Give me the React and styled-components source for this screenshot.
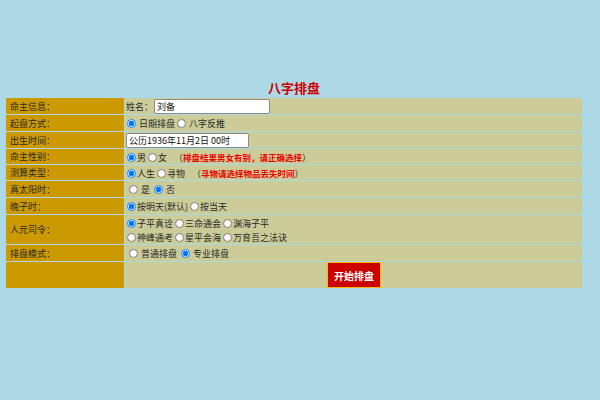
import React from 'react'
import styled, { createGlobalStyle } from 'styled-components'

const GlobalStyle = createGlobalStyle`
    html, body {
        margin: 0;
        padding: 0;
        background: #add8e6;
        font-family: "Noto Sans CJK SC", "Liberation Sans", sans-serif;
    }
`

const Page = styled.div`
    width: 600px;
    height: 400px;
    padding-top: 79px;
    box-sizing: border-box;
`

const Title = styled.div`
    width: 578px;
    margin-left: 5px;
    text-align: center;
    color: #cc0000;
    font-size: 13px;
    font-weight: bold;
    line-height: 18px;
`

const Board = styled.table`
    width: 578px;
    margin-left: 5px;
    border-spacing: 1px;
    border-collapse: separate;
    font-size: 9px;
    color: #2a2a2a;
`

const Label = styled.td`
    width: 114px;
    height: ${p => p.$h || 16}px;
    padding: 0 0 0 4px;
    background: #cc9900;
    vertical-align: middle;
    white-space: nowrap;
    line-height: 13px;
`

const Field = styled.td`
    height: ${p => p.$h || 16}px;
    padding: 0 0 0 1px;
    background: #cccc99;
    vertical-align: middle;
    white-space: nowrap;
    line-height: 13px;
    text-align: ${p => p.$center ? 'center' : 'left'};
`

const TextBox = styled.input`
    width: ${p => p.$w}px;
    height: 15px;
    box-sizing: border-box;
    margin: 0;
    padding: 0 2px;
    border: 1px solid #8a8a8a;
    border-radius: 2px;
    background: #fff;
    font-family: inherit;
    font-size: 9px;
    color: #111;
    vertical-align: middle;
`

const Radio = styled.input.attrs({ type: 'radio' })`
    width: 9px;
    height: 9px;
    margin: 0 1px 0 ${p => p.$gap ? 3 : 1}px;
    vertical-align: middle;
    accent-color: #0075ff;
`

const Option = styled.span`
    vertical-align: middle;
    margin-right: 1px;
`

const Note = styled.span`
    margin-left: 6px;
    vertical-align: middle;
`

const Warn = styled.b`
    color: #ee0000;
    font-size: 8.5px;
    font-weight: bold;
`

const Start = styled.button`
    width: 54px;
    height: 26px;
    margin: 0;
    border: 1px solid #ffb800;
    background: #cc0000;
    color: #fff;
    font-family: inherit;
    font-size: 10px;
    font-weight: bold;
    vertical-align: middle;
`

const Choice = ({ name, label, checked, gap }) => (
    <>
        <Radio name={name} defaultChecked={checked} $gap={gap} />
        <Option>{label}</Option>
    </>
)

const App = () => {
    return (
        <Page>
            <GlobalStyle />
            <Title>八字排盘</Title>
            <Board>
                <tbody>
                    <tr>
                        <Label>命主信息：</Label>
                        <Field>
                            <Option>姓名：</Option>
                            <TextBox $w={116} defaultValue="刘备" />
                        </Field>
                    </tr>
                    <tr>
                        <Label>起盘方式：</Label>
                        <Field>
                            <Choice name="way" label=" 日期排盘" checked />
                            <Choice name="way" label=" 八字反推" />
                        </Field>
                    </tr>
                    <tr>
                        <Label>出生时间：</Label>
                        <Field>
                            <TextBox $w={123} defaultValue="公历1936年11月2日 00时" />
                        </Field>
                    </tr>
                    <tr>
                        <Label $h={15}>命主性别：</Label>
                        <Field $h={15}>
                            <Choice name="sex" label="男" checked />
                            <Choice name="sex" label="女" />
                            <Note>（<Warn>排盘结果男女有别，请正确选择</Warn>）</Note>
                        </Field>
                    </tr>
                    <tr>
                        <Label $h={15}>测算类型：</Label>
                        <Field $h={15}>
                            <Choice name="kind" label="人生" checked />
                            <Choice name="kind" label="寻物" />
                            <Note>（<Warn>寻物请选择物品丢失时间</Warn>）</Note>
                        </Field>
                    </tr>
                    <tr>
                        <Label>真太阳时：</Label>
                        <Field>
                            <Choice name="sun" label=" 是" gap />
                            <Choice name="sun" label=" 否" checked gap />
                        </Field>
                    </tr>
                    <tr>
                        <Label>晚子时：</Label>
                        <Field>
                            <Choice name="night" label="按明天(默认)" checked />
                            <Choice name="night" label="按当天" />
                        </Field>
                    </tr>
                    <tr>
                        <Label $h={29}>人元司令：</Label>
                        <Field $h={29}>
                            <Choice name="rule" label="子平真诠" checked />
                            <Choice name="rule" label="三命通会" />
                            <Choice name="rule" label="渊海子平" />
                            <br />
                            <Choice name="rule" label="神峰通考" />
                            <Choice name="rule" label="星平会海" />
                            <Choice name="rule" label="万育吾之法诀" />
                        </Field>
                    </tr>
                    <tr>
                        <Label>排盘模式：</Label>
                        <Field>
                            <Choice name="mode" label=" 普通排盘" gap />
                            <Choice name="mode" label=" 专业排盘" checked gap />
                        </Field>
                    </tr>
                    <tr>
                        <Label $h={26}></Label>
                        <Field $h={26} $center>
                            <Start>开始排盘</Start>
                        </Field>
                    </tr>
                </tbody>
            </Board>
        </Page>
    )
}

export default App
